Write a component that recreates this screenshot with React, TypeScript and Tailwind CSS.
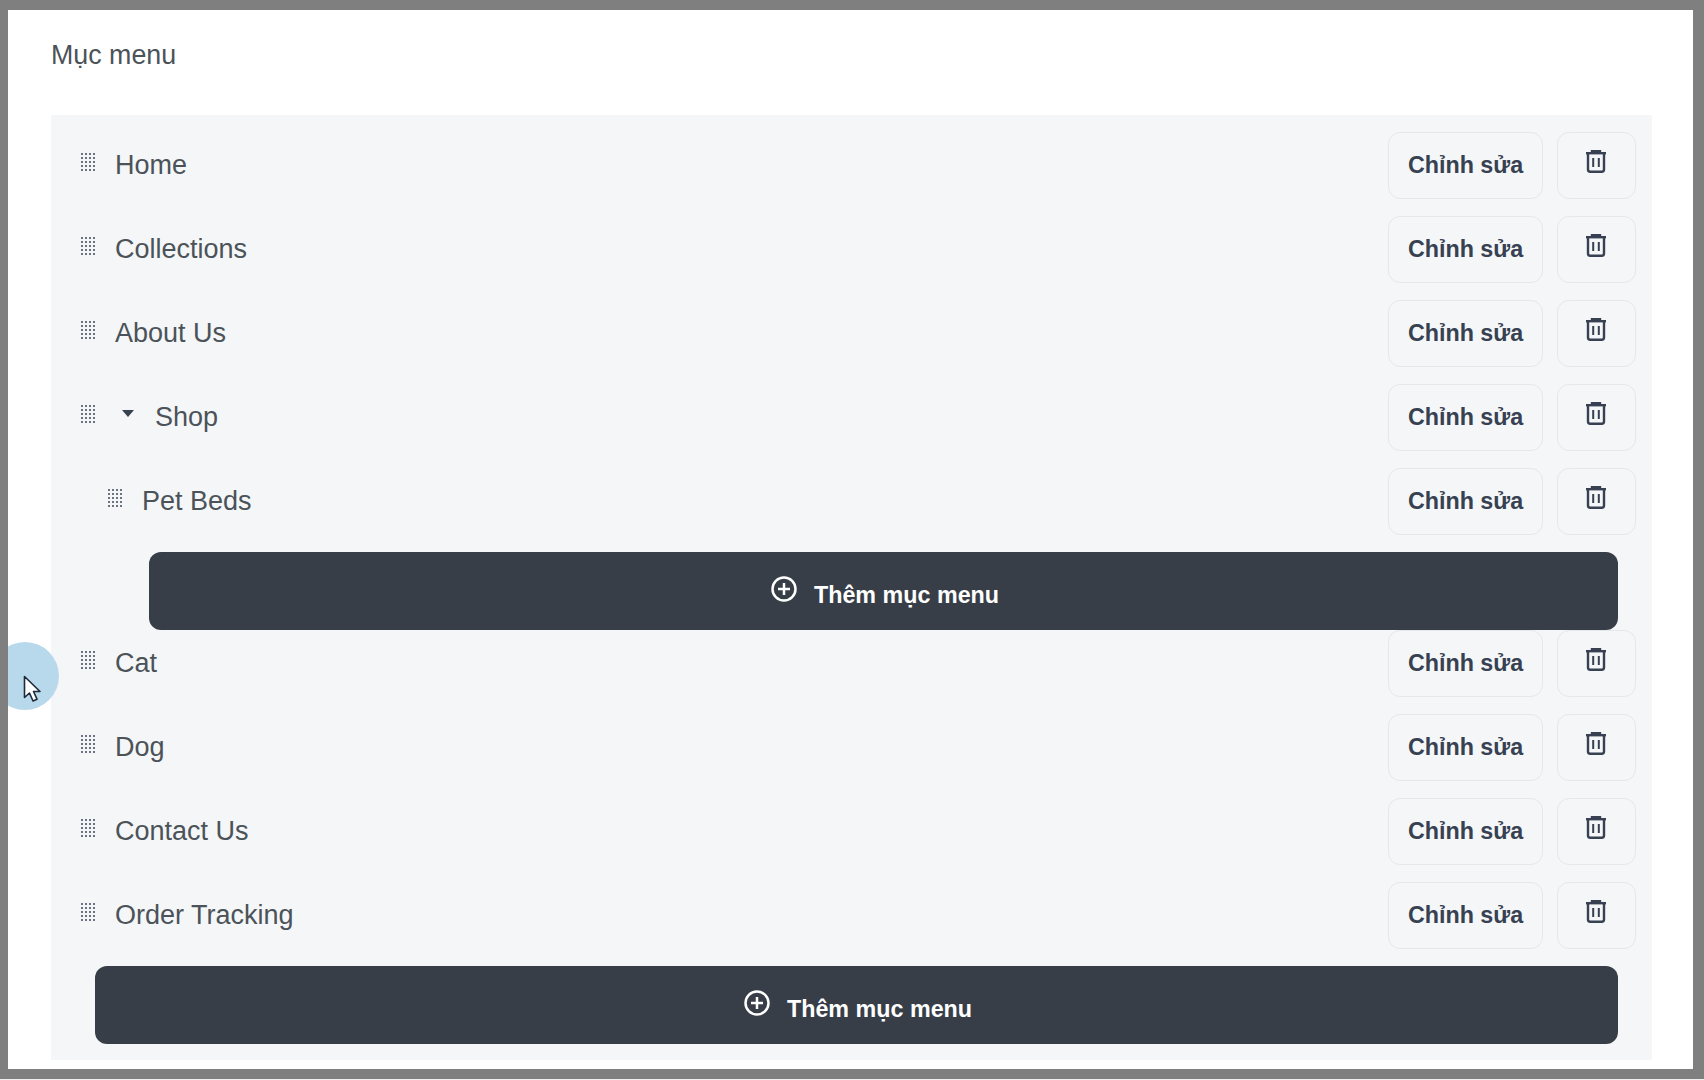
import React from 'react'

interface RowProps {
    label: string;
    nested?: boolean;
    caret?: boolean;
}

const items: RowProps[] = [
    { label: 'Home' },
    { label: 'Collections' },
    { label: 'About Us' },
    { label: 'Shop', caret: true },
    { label: 'Pet Beds', nested: true },
]

const itemsAfter: RowProps[] = [
    { label: 'Cat' },
    { label: 'Dog' },
    { label: 'Contact Us' },
    { label: 'Order Tracking' },
]

const GripIcon = () => (
    <svg width="14" height="18" viewBox="0 0 14 18" className="shrink-0 text-[#6b7280]" fill="currentColor">
        {[0, 4, 8, 12, 16].map((y) =>
            [0, 4, 8, 12].map((x) => <rect key={`${x}-${y}`} x={x} y={y} width="2" height="2" />)
        )}
    </svg>
)

const TrashIcon = () => (
    <svg width="20" height="23" viewBox="0 0 20 23" fill="none" stroke="#374151" strokeWidth="2.4">
        <path d="M0 3.2h20" />
        <path d="M6 2.5V1.2h8v1.3" />
        <path d="M2 4v15.5a2.2 2.2 0 0 0 2.2 2.2h11.6a2.2 2.2 0 0 0 2.2-2.2V4" />
        <path d="M7.2 8v9M12.8 8v9" strokeWidth="2" />
    </svg>
)

const PlusCircle = () => (
    <svg width="26" height="26" viewBox="0 0 26 26" fill="none" stroke="currentColor" strokeWidth="2.5" className="shrink-0">
        <circle cx="13" cy="13" r="11.5" />
        <path d="M13 7v12M7 13h12" />
    </svg>
)

const MenuRow = ({ label, nested, caret }: RowProps) => (
    <div className={`flex h-[66px] items-start pr-[16px] ${nested ? 'pl-[57px]' : 'pl-[30px]'}`}>
        <div className="mt-[21px]">
            <GripIcon />
        </div>
        {caret && (
            <div className="ml-[27px] mt-[26px] h-0 w-0 border-x-[6.5px] border-t-[7px] border-x-transparent border-t-[#374151]"></div>
        )}
        <span className={`ml-[20px] text-[27px] leading-[67px] text-[#4b5359] ${caret ? 'ml-[21px]' : ''}`}>
            {label}
        </span>
        <div className="ml-auto flex gap-[14px]">
            <button type="button" className="h-[67px] w-[155px] rounded-[12px] border border-[#e5e7eb] text-[23.3px] font-bold text-[#374151]">
                Chỉnh sửa
            </button>
            <button type="button" className="flex h-[67px] w-[79px] justify-center rounded-[12px] border border-[#e5e7eb] pr-[2px] pt-[17px]">
                <TrashIcon />
            </button>
        </div>
    </div>
)

const AddButton = ({ className }: { className: string }) => (
    <button
        type="button"
        className={`flex h-[78px] items-center justify-center gap-[17px] rounded-[12px] bg-[#373e47] text-[23.3px] font-bold text-white ${className}`}
    >
        <span className="-mt-[5px] ml-[3px]"><PlusCircle /></span>
        <span className="mt-[8px]">Thêm mục menu</span>
    </button>
)

const App = () => {
    return (
        <div className="h-[1080px] w-[1704px] bg-[#eeeeee] font-['Liberation_Sans',Arial,sans-serif]">
            <div className="relative h-[1079px] overflow-hidden border-b-[10px] border-l-[8px] border-r-[11px] border-t-[10px] border-[#7f7f7f] bg-white">

                {/* Title */}
                <h2 className="pl-[43px] pt-[25px] text-[26.8px] leading-[40px] text-[#4b5359]">Mục menu</h2>

                {/* Menu panel */}
                <div className="ml-[43px] mt-[40px] w-[1601px] bg-[#f4f6f8] pb-[16px] pt-[17px]">
                    <div className="flex flex-col gap-[18px]">
                        {items.map((item) => (
                            <MenuRow key={item.label} {...item} />
                        ))}
                    </div>

                    <AddButton className="ml-[98px] mt-[18px] w-[1469px]" />

                    <div className="flex flex-col gap-[18px]">
                        {itemsAfter.map((item) => (
                            <MenuRow key={item.label} {...item} />
                        ))}
                    </div>

                    <AddButton className="ml-[44px] mt-[18px] w-[1523px]" />
                </div>

                {/* Cursor highlight */}
                <div className="absolute left-[-17px] top-[632px] h-[68px] w-[68px] rounded-full bg-[#b8d9ec]"></div>
                <svg className="absolute left-[15px] top-[665px]" width="18" height="28" viewBox="0 0 18 28">
                    <path d="M1.5 1.5v21l5-4.5 3.5 8 4-1.8-3.5-7.7h6.5z" fill="#fff" stroke="#1f2937" strokeWidth="1.6" strokeLinejoin="round" />
                </svg>
            </div>
        </div>
    )
}

export default App
